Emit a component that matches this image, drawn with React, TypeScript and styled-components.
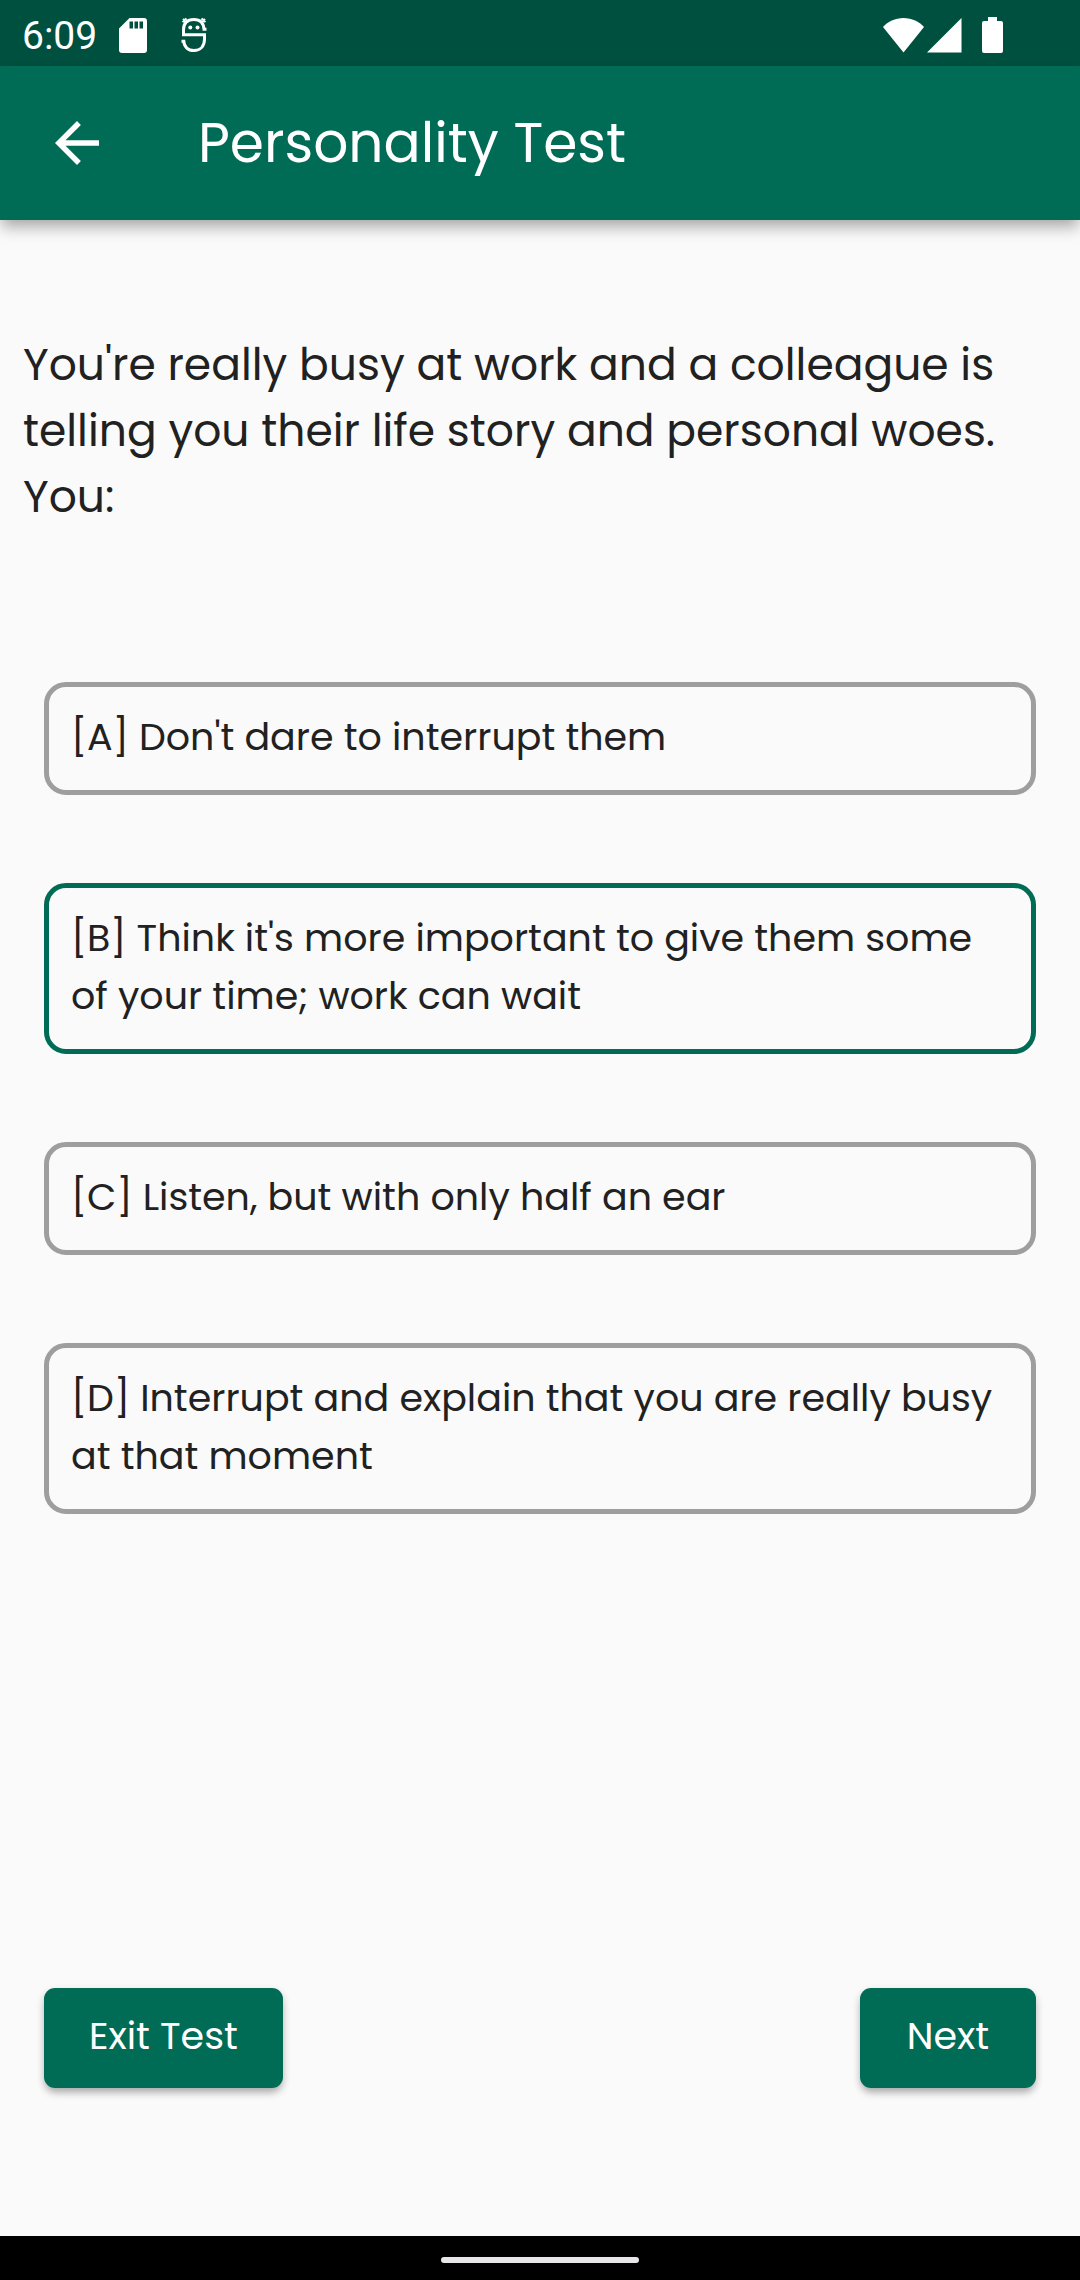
import React, { useState } from "react";
import styled, { createGlobalStyle } from "styled-components";

const green = "#006c56";
const greenDark = "#00503f";
const ink = "#212121";
const grey = "#9e9e9e";

const GlobalStyle = createGlobalStyle`
  *, *::before, *::after { box-sizing: border-box; }
  body {
    margin: 0;
    background: #fafafa;
    color: ${ink};
    font-family: Poppins, Inter, "Liberation Sans", sans-serif;
  }
`;

const Screen = styled.div`
  display: flex;
  flex-direction: column;
  min-height: 100vh;
`;

const StatusBar = styled.div`
  display: flex;
  align-items: center;
  justify-content: space-between;
  height: 66px;
  padding: 4px 77px 0 22px;
  background: ${greenDark};
  color: #fff;
`;

const StatusGroup = styled.div<{ $gap: number }>`
  display: flex;
  align-items: center;
  gap: ${(p) => p.$gap}px;

  svg { display: block; }
`;

const Clock = styled.time`
  padding-top: 2px;
  font-family: Roboto, sans-serif;
  font-size: 39px;
  line-height: 46px;
`;

const AppBar = styled.header`
  display: flex;
  align-items: center;
  gap: 88px;
  height: 154px;
  padding: 0 44px;
  background: ${green};
  color: #fff;
  box-shadow: 0 6px 14px -3px rgba(0, 0, 0, 0.28), 0 11px 14px rgba(0, 0, 0, 0.12);
`;

const BackButton = styled.button`
  padding: 0;
  border: 0;
  background: none;
  color: inherit;
  cursor: pointer;

  svg { display: block; }
`;

const Title = styled.h1`
  margin: 0;
  font-size: 55px;
  font-weight: 400;
  line-height: 82px;
`;

const Quiz = styled.form`
  display: flex;
  flex: 1;
  flex-direction: column;
  padding-top: 112px;
`;

const Options = styled.fieldset`
  display: flex;
  flex-direction: column;
  gap: 88px;
  min-width: 0;
  margin: 0;
  padding: 0 44px;
  border: 0;
`;

const Question = styled.legend`
  margin: 0 -44px 152px;
  padding: 0 23px;
  font-size: 44px;
  line-height: 66px;
`;

const Option = styled.label<{ $selected: boolean }>`
  display: block;
  padding: 21px 22px 24px;
  border: 5px solid ${(p) => (p.$selected ? green : grey)};
  border-radius: 22px;
  font-size: 38px;
  line-height: 58px;
  cursor: pointer;
`;

const Radio = styled.input`
  position: absolute;
  width: 1px;
  height: 1px;
  margin: 0;
  opacity: 0;
`;

const Actions = styled.div`
  display: flex;
  justify-content: space-between;
  margin-top: auto;
  padding: 88px 44px 148px;
`;

const ActionButton = styled.button`
  min-width: 176px;
  height: 100px;
  padding: 0 45px 4px;
  border: 0;
  border-radius: 11px;
  background: ${green};
  color: #fff;
  font-family: inherit;
  font-size: 38px;
  line-height: 58px;
  box-shadow: 0 6px 8px -2px rgba(0, 0, 0, 0.25), 0 3px 8px rgba(0, 0, 0, 0.14);
  cursor: pointer;
`;

const NavBar = styled.footer`
  display: flex;
  align-items: center;
  justify-content: center;
  height: 44px;
  padding-top: 4px;
  background: #000;
`;

const HomeHandle = styled.div`
  width: 198px;
  height: 6px;
  border-radius: 3px;
  background: #e8e6e8;
`;

const SdCardIcon = () => (
  <svg width="28" height="35" viewBox="0 0 28 35" fill="currentColor" aria-hidden="true">
    <path
      fillRule="evenodd"
      d="M10.500 0H25a3 3 0 0 1 3 3v29a3 3 0 0 1-3 3H3a3 3 0 0 1-3-3V10.500zM10.500 3.500v7h3.500v-7zM15.500 3.500v7H19v-7zM20.500 3.500v7H24v-7z"
    />
  </svg>
);

const RobotIcon = () => (
  <svg width="26" height="36" viewBox="0 0 26 36" fill="none" stroke="currentColor" aria-hidden="true">
    <path
      d="M25.500 12.200H23C22.500 5.500 19 2.500 13 2.500S2.500 5.500 2.500 13V17.800H23.500V22C23.500 29.500 19 33.500 13 33.500S3.200 30 2.800 24.200H0.500"
      strokeWidth="3"
    />
    <path d="M2 2l4 4M24 2l-4 4M1.500 5l4-3.500M24.500 5l-4-3.500" strokeWidth="2.200" />
    <circle cx="9.300" cy="10.500" r="2" fill="currentColor" stroke="none" />
    <circle cx="16.500" cy="10.500" r="2" fill="currentColor" stroke="none" />
  </svg>
);

const WifiIcon = () => (
  <svg width="41" height="36" viewBox="0 0 41 36" fill="currentColor" aria-hidden="true">
    <path d="M20.500 35.500L0 10C5 4.500 12 1 20.500 1S36 4.500 41 10z" />
  </svg>
);

const SignalIcon = () => (
  <svg width="35" height="36" viewBox="0 0 35 36" fill="currentColor" aria-hidden="true">
    <path d="M34.500 1v34.500H0z" />
  </svg>
);

const BatteryIcon = () => (
  <svg width="21" height="36" viewBox="0 0 21 36" fill="currentColor" aria-hidden="true">
    <path d="M6 0h9v4h4a2 2 0 0 1 2 2v28a2 2 0 0 1-2 2H2a2 2 0 0 1-2-2V6a2 2 0 0 1 2-2h4z" />
  </svg>
);

const BackIcon = () => (
  <svg width="66" height="66" viewBox="0 0 24 24" fill="currentColor" aria-hidden="true">
    <path d="M20 11H7.830l5.590-5.590L12 4l-8 8 8 8 1.410-1.410L7.830 13H20z" />
  </svg>
);

const answers = [
  { id: "A", text: "Don't dare to interrupt them" },
  { id: "B", text: "Think it's more important to give them some of your time; work can wait" },
  { id: "C", text: "Listen, but with only half an ear" },
  { id: "D", text: "Interrupt and explain that you are really busy at that moment" },
];

export default function App() {
  const [selected, setSelected] = useState("B");

  return (
    <Screen>
      <GlobalStyle />
      <StatusBar>
        <StatusGroup $gap={34}>
          <StatusGroup $gap={22}>
            <Clock>6:09</Clock>
            <SdCardIcon />
          </StatusGroup>
          <RobotIcon />
        </StatusGroup>
        <StatusGroup $gap={20}>
          <StatusGroup $gap={3}>
            <WifiIcon />
            <SignalIcon />
          </StatusGroup>
          <BatteryIcon />
        </StatusGroup>
      </StatusBar>
      <AppBar>
        <BackButton type="button" aria-label="Back">
          <BackIcon />
        </BackButton>
        <Title>Personality Test</Title>
      </AppBar>
      <Quiz onSubmit={(e) => e.preventDefault()}>
        <Options>
          <Question>
            You're really busy at work and a colleague is telling you their life story and personal woes. You:
          </Question>
          {answers.map(({ id, text }) => (
            <Option key={id} htmlFor={`answer-${id}`} $selected={id === selected}>
              <Radio
                type="radio"
                name="answer"
                id={`answer-${id}`}
                value={id}
                checked={id === selected}
                onChange={() => setSelected(id)}
              />
              {`[${id}] ${text}`}
            </Option>
          ))}
        </Options>
        <Actions>
          <ActionButton type="button">Exit Test</ActionButton>
          <ActionButton type="submit">Next</ActionButton>
        </Actions>
      </Quiz>
      <NavBar>
        <HomeHandle />
      </NavBar>
    </Screen>
  );
}
